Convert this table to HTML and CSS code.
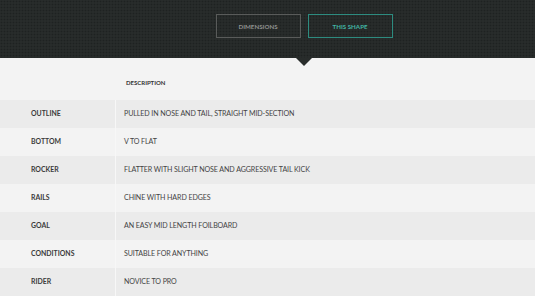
FILE: index.html
```html
<html>
<head>
    <link rel="stylesheet" href="styles.css">
</head>
<body>
    <!-- Tabs header -->
    <div class="tabs-bar">
        <div class="tabs">
            <button class="tab">Dimensions</button>
            <button class="tab active">This Shape</button>
            <span class="tab-pointer"></span>
        </div>
    </div>

    <!-- Shape specs -->
    <div class="specs">
        <div class="specs-head">
            <div class="label-col"></div>
            <div class="head-title">Description</div>
        </div>
        <div class="spec-row">
            <div class="spec-label">Outline</div>
            <div class="spec-value">Pulled in nose and tail, straight mid-section</div>
        </div>
        <div class="spec-row">
            <div class="spec-label">Bottom</div>
            <div class="spec-value">V to flat</div>
        </div>
        <div class="spec-row">
            <div class="spec-label">Rocker</div>
            <div class="spec-value">Flatter with slight nose and aggressive tail kick</div>
        </div>
        <div class="spec-row">
            <div class="spec-label">Rails</div>
            <div class="spec-value">Chine with hard edges</div>
        </div>
        <div class="spec-row">
            <div class="spec-label">Goal</div>
            <div class="spec-value">An easy mid length foilboard</div>
        </div>
        <div class="spec-row">
            <div class="spec-label">Conditions</div>
            <div class="spec-value">Suitable for anything</div>
        </div>
        <div class="spec-row">
            <div class="spec-label">Rider</div>
            <div class="spec-value">Novice to pro</div>
        </div>
    </div>
</body>
</html>
```

FILE: styles.css
```css
body {
    margin: 0;
    font-family: Lato, "Noto Sans", sans-serif;
    background-color: #f3f3f3;
    color: #3a3a3a;
    text-transform: uppercase;
}
.tabs-bar {
    height: 58px;
    background-color: #282c2b;
    background-image: radial-gradient(circle, #1e2221 0.8px, transparent 1.1px);
    background-size: 3px 3px;
    display: flex;
    justify-content: center;
    padding-left: 73px;
}
.tabs {
    position: relative;
    display: flex;
    gap: 7px;
    margin-top: 14px;
    height: 24px;
}
.tab {
    width: 85px;
    height: 24px;
    background: none;
    border: 1px solid #595b5a;
    color: #909291;
    font-family: Lato, sans-serif;
    font-weight: 700;
    font-size: 6.2px;
    text-transform: uppercase;
    padding: 0;
}
.tab.active {
    border-color: #2d8b7f;
    color: #42b6a5;
}
.tab-pointer {
    position: absolute;
    left: 50%;
    top: 44px;
    margin-left: -8px;
    width: 0;
    height: 0;
    border-left: 8px solid transparent;
    border-right: 8px solid transparent;
    border-top: 8px solid #282c2b;
}
.specs-head {
    display: flex;
    height: 42px;
}
.label-col {
    width: 116px;
}
.head-title {
    padding: 21px 0 0 10px;
    font-size: 6px;
    font-weight: 700;
    color: #333;
}
.spec-row {
    display: flex;
    height: 28px;
}
.spec-row:nth-child(even) {
    background-color: #ebebeb;
}
.spec-label {
    width: 116px;
    box-sizing: border-box;
    padding: 8px 0 0 31px;
    border-right: 1px solid #f7f7f7;
    font-size: 6.9px;
    font-weight: 700;
    line-height: 10px;
    color: #3a3a3a;
}
.spec-value {
    padding: 9px 0 0 8px;
    font-size: 7.1px;
    letter-spacing: -0.1px;
    line-height: 10px;
    color: #444;
}
```
